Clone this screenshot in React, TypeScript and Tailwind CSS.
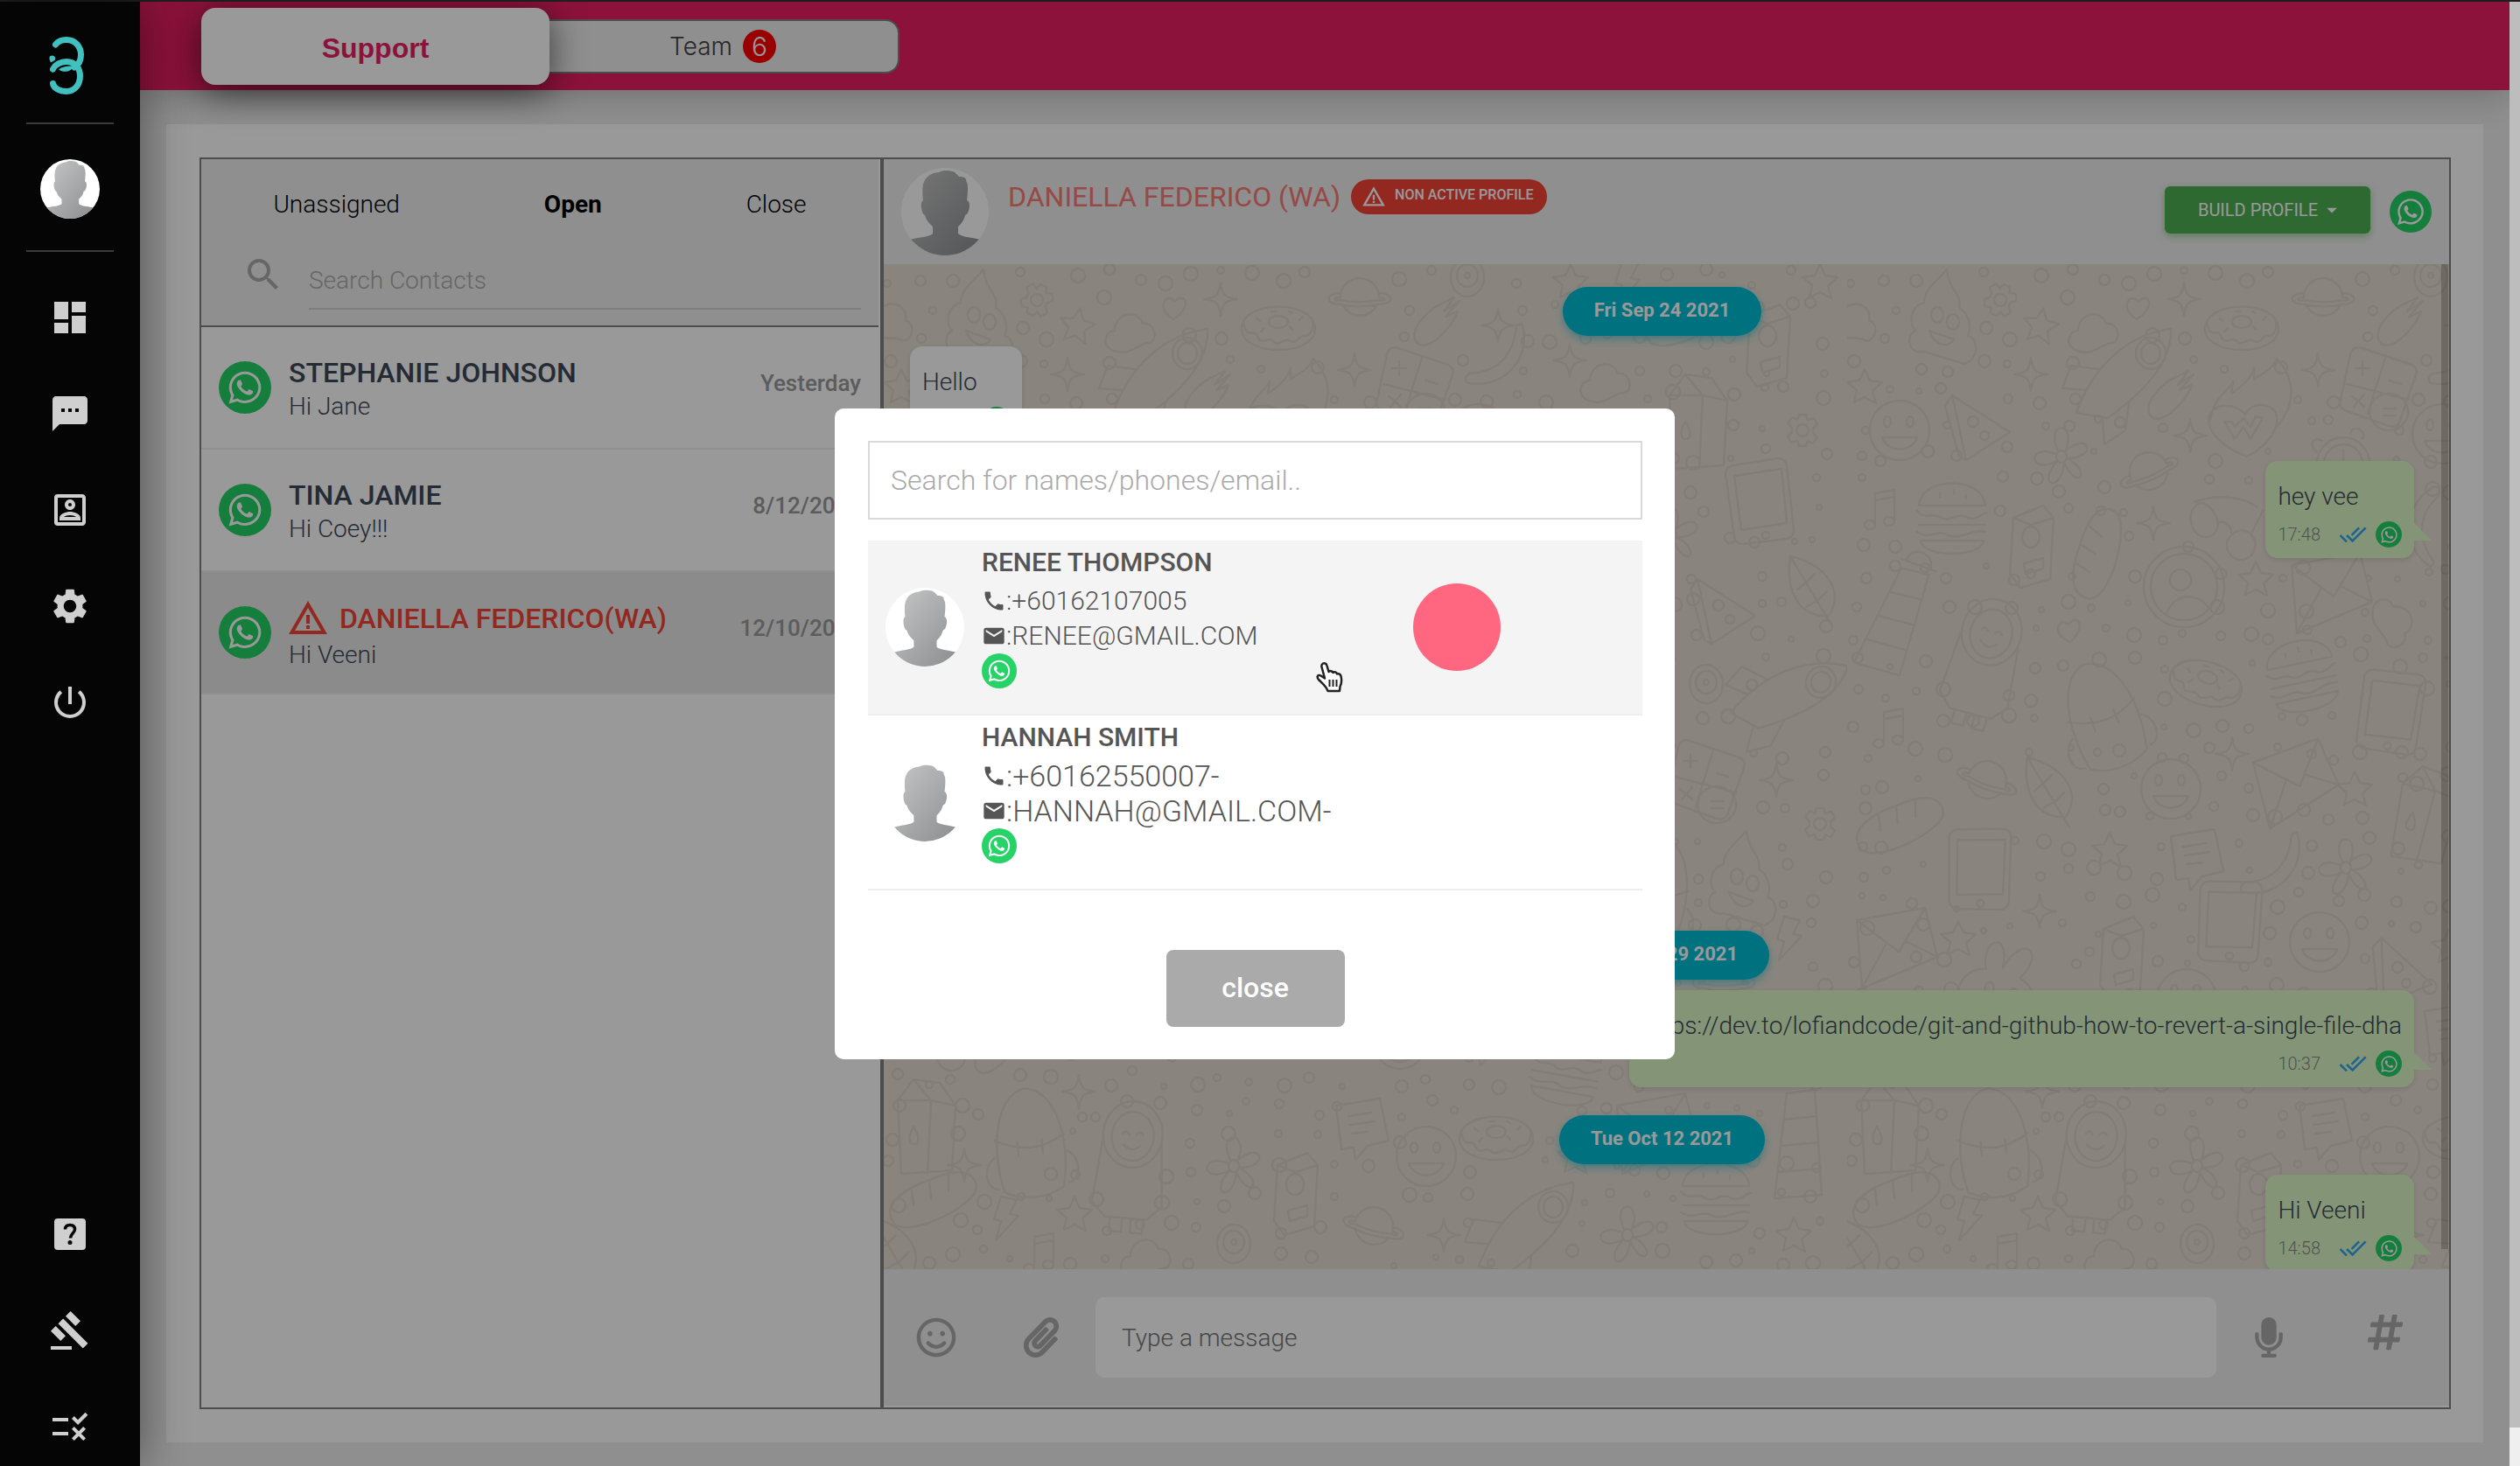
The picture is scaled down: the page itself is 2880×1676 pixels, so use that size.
import React from "react";
import {
  MdArrowDropDown,
  MdDashboard,
  MdDoneAll,
  MdEmail,
  MdGavel,
  MdOutlinePortrait,
  MdPhone,
  MdPowerSettingsNew,
  MdRule,
  MdSearch,
  MdSettings,
  MdTextsms,
  MdWarningAmber,
} from "react-icons/md";
import { FaHashtag, FaMicrophone, FaPaperclip, FaRegSmile, FaWhatsapp } from "react-icons/fa";

/* ---------- small drawings ---------- */

function Logo() {
  return (
    <svg viewBox="0 0 80 86" className="h-[86px] w-20" fill="none" stroke="#40c1c0" strokeWidth="7" strokeLinecap="round" aria-hidden="true">
      <path d="M23.500 19C26 15.500 30.500 13.500 36 13.500C46 13.500 52.500 21.500 52.500 30.500C52.500 37 49.500 42.500 45 45" />
      <path d="M20.500 47C23 42 29 38.500 36 38.500C46 38.500 51.500 46 51.500 55C51.500 65 45 72.500 36 72.500C28 72.500 21.500 69 20.500 63.500" />
      <path d="M27 47.500C32 43.500 39 43 44 44C42 49.500 33 52 27 47.500Z" fill="#40c1c0" stroke="none" />
      <path d="M18 39.500C15.500 35 16 31.500 19.500 31.500C23 31.500 24 35 22.500 37Z" fill="#40c1c0" stroke="none" />
    </svg>
  );
}

function Avatar({ id, className }: { id: string; className: string }) {
  return (
    <svg viewBox="0 0 100 100" className={className} role="img" aria-label="Profile picture">
      <defs>
        <linearGradient id={id + "-g"} x1="0" y1="0" x2="1" y2="1">
          <stop offset="0" stopColor="#c6c6c6" />
          <stop offset="1" stopColor="#8b8d90" />
        </linearGradient>
        <clipPath id={id + "-c"}>
          <circle cx="50" cy="50" r="50" />
        </clipPath>
      </defs>
      <circle cx="50" cy="50" r="50" fill="#fff" />
      <path
        clipPath={`url(#${id}-c)`}
        fill={`url(#${id}-g)`}
        d="M36 75V67C31 63 28 58 27 54C23 53 21 38 25 37C24 28 24 20 26 16C29 8 38 5 43 5C47 2 55 3 59 4C62 5 64 8 66 10C72 10 75 12 74 15C77 18 76 29 75 37C80 38 78 53 73 54C72 58 70 63 65 67V75C68 79 80 79 90 82V100H10V82C20 79 33 79 36 75Z"
      />
    </svg>
  );
}

function WhatsAppBadge({ size }: { size: "lg" | "md" | "sm" | "xs" }) {
  const box = { lg: "size-[60px]", md: "size-12", sm: "size-10", xs: "size-[30px]" }[size];
  const glyph = { lg: "size-[42px]", md: "size-[34px]", sm: "size-[28px]", xs: "size-[21px]" }[size];
  return (
    <span className={`flex shrink-0 items-center justify-center rounded-full bg-[#25d366] text-white ${box}`}>
      <FaWhatsapp className={glyph} aria-label="WhatsApp" />
    </span>
  );
}

function HelpBoxIcon() {
  return (
    <svg viewBox="0 0 48 48" className="size-12" aria-hidden="true">
      <rect x="6" y="6" width="36" height="36" rx="4" fill="currentColor" />
      <path d="M18.500 18.500C18.500 15 20.500 13.500 24 13.500C27.500 13.500 29.500 15.500 29.500 18.500C29.500 22.500 24.500 23.500 24.500 28.500" fill="none" stroke="#050505" strokeWidth="3.500" />
      <circle cx="24" cy="33.500" r="2.500" fill="#050505" />
    </svg>
  );
}

function HandCursor() {
  return (
    <svg viewBox="0 0 32 36" className="h-9 w-8" aria-hidden="true">
      <path
        d="M9 2.500C11 1.500 13 3 13.500 5L15.500 12C17 10.500 19.500 11 20.500 13C22 11.500 24.500 12.500 25 14.500C27 13.500 29 15 29.500 17C30.500 21 30.500 25 28.500 29L28 34H14.500C13 29 8 25 4.500 21.500C1 18 3 14.500 6.500 16.500L11 19.500L7.500 6.500C7 4.500 7.500 3.500 9 2.500Z"
        fill="#fff"
        stroke="#222"
        strokeWidth="2.500"
        strokeLinejoin="round"
      />
      <path d="M16.500 21V29M20.500 21V29M24.500 21V29" stroke="#222" strokeWidth="2" />
    </svg>
  );
}

/* ---------- chat wallpaper ---------- */

const STAR = "M0 -20L6 -7L20 -5L9 5L13 19L0 12L-12 18L-9 4L-20 -5L-6 -7Z";
const SPARK = "M0 -19C2 -5 4 -2 19 0C4 2 2 5 0 19C-2 5 -4 2 -19 0C-4 -2 -2 -5 0 -19Z";
const PLANET =
  "M-22 0A22 22 0 0 1 22 0M-20 8A22 22 0 0 0 20 8M-22 -5C-40 -5 -40 8 -22 8C-8 11 8 11 22 8C40 8 40 -5 22 -5M-22 0C-32 0 -30 5 -22 3M22 0C32 0 30 5 22 3C8 6 -8 6 -22 3";
const CLOUD = "M-22 20C-34 12 -28 -2 -18 -2C-18 -22 8 -28 14 -10C28 -12 32 8 22 12C10 10 0 30 -22 20Z";
const HEART = "M0 12C-24 2 -12 -18 -2 -8C8 -22 20 -6 0 12Z";
const DONUT =
  "M-42 0C-42 -34 42 -34 42 0C42 32 -42 32 -42 0ZM-40 -8C-36 14 -28 -2 -24 8C-20 20 -12 8 -6 14C0 22 8 8 14 14C22 18 24 6 30 8C36 8 42 0 38 -12M-11 -8A11 7 0 1 0 11 -8A11 7 0 1 0 -11 -8M-25 -12L-21 -9M-20 3L-16 -1M16 1L13 -3M24 -10L28 -14M-8 -20H-2M12 -20L16 -18";
const ROCKET =
  "M-60 46C-40 -10 0 -44 48 -50C50 -10 14 24 -24 52ZM-60 46L-24 52M8 -22A17 18 0 1 0 42 -22A17 18 0 1 0 8 -22M14 -22A11 12 0 1 0 36 -22A11 12 0 1 0 14 -22M-34 -4L-66 -8L-76 18L-50 20M0 34L-4 66L-28 82L-30 54";
const MITTEN = "M-24 20C-32 4 -6 -18 4 -22L20 -30L8 -14L26 -26L10 -8L24 -14C16 8 -14 36 -24 20Z";
const BANANA = "M24 -40C36 -8 10 36 -38 28C-44 20 -36 16 -28 16C2 12 16 -10 18 -38Z";
const CALC =
  "M-22 -46L38 -26Q46 -22 43 -14L24 40Q20 46 12 44L-38 26Q-46 22 -43 14L-32 -38Q-30 -46 -22 -46ZM8 -34L-12 30M-36 -4L34 14M-18 -30V-14M-26 -22H-10M12 -8L26 -4M-30 10L-16 22M-16 8L-28 22M-10 28A22 21 0 1 0 34 28A22 21 0 1 0 -10 28M6 24H20M6 32H20";
const FLAME =
  "M-42 6C-38 -20 -22 -26 -16 -38L-18 -24C-6 -32 6 -42 8 -54L8 -40C18 -48 30 -52 34 -64C56 -40 56 -12 34 14M0 48C-60 24 -48 -12 -24 -10C-12 -10 -4 -4 -2 0C4 -14 24 -14 32 -4C40 14 24 36 0 48ZM-26 8L-14 28L-4 14L4 28L18 4L10 2L4 14L-4 4L-14 14L-18 8Z";
const CLOCK =
  "M-30 0A30 30 0 1 0 30 0A30 30 0 1 0 -30 0M-22 0A22 22 0 1 0 22 0A22 22 0 1 0 -22 0M0 0V-16M0 0L10 6M-24 -26C-40 -34 -36 -12 -30 -14M8 -34C10 -46 28 -38 22 -28";
const FACE =
  "M-34 0A34 34 0 1 0 34 0A34 34 0 1 0 -34 0M-18 -10A4 6 0 1 0 -10 -10A4 6 0 1 0 -18 -10M8 -10A4 6 0 1 0 16 -10A4 6 0 1 0 8 -10M-20 8C-14 26 14 26 20 8Z";
const GLASSES =
  "M-34 -20C-48 -10 -38 18 -22 16C-8 14 -6 -2 -14 -12C-20 -22 -30 -26 -34 -20ZM6 14C-6 24 4 44 20 42C34 38 38 22 28 12C20 6 12 8 6 14ZM-10 0C-2 -4 6 2 6 12M-36 -24C-10 -34 20 -30 36 -18M30 10L42 -14";
const PERSON =
  "M-46 0A46 46 0 1 0 46 0A46 46 0 1 0 -46 0M-38 0A38 38 0 1 0 38 0A38 38 0 1 0 -38 0M-16 -8A12 12 0 1 0 8 -8A12 12 0 1 0 -16 -8M-20 30C-10 6 16 6 28 24";
const ENVELOPE = "M-42 -28L36 -42L50 14L-36 50ZM-42 -28L6 8L36 -42M-36 50L-8 -2M50 14L14 -4";
const CAN = "M-20 -30L14 -44L26 -30L22 40L-12 50L-24 34ZM-20 -30L0 -22L26 -30M-10 -8A10 12 0 1 0 10 -8A10 12 0 1 0 -10 -8M-8 22L14 16V28L-6 34Z";
const DEVICE = "M-30 -40L22 -48Q30 -48 32 -40L40 34Q40 42 32 44L-18 50Q-26 50 -28 42L-38 -30Q-38 -38 -30 -40ZM-28 -28L26 -36L32 26L-20 34ZM4 40A4 4 0 1 0 12 40A4 4 0 1 0 4 40";
const BUNNY =
  "M-30 50C-60 30 -50 -4 -24 -8C-40 -40 -8 -60 -6 -14C6 -60 38 -44 16 -8C44 0 50 34 30 50M-20 12A5 7 0 1 0 -10 12A5 7 0 1 0 -20 12M8 12A5 7 0 1 0 18 12A5 7 0 1 0 8 12M-6 26L0 32L8 26";
const BACKPACK = "M-34 60C-44 20 -38 -50 0 -56C38 -50 46 10 34 60C14 72 -14 72 -34 60ZM-40 0C-10 16 14 16 40 0M-14 4V20M14 4V20M-42 20C-58 30 -54 56 -40 56M42 20C58 30 54 56 40 56";
const KID =
  "M-34 -20A34 38 0 1 1 34 -20A34 38 0 1 1 -34 -20M-24 -18A24 28 0 1 1 24 -18A24 28 0 1 1 -24 -18M-12 -20Q-8 -26 -4 -20M4 -20Q8 -26 12 -20M-10 -8Q0 2 10 -8M-34 -10L-40 60L-24 76H24L40 60L34 -10M-18 76V92H-4V76M6 76V92H20V76";
const FLOWER =
  "M-6 0A6 7 0 1 0 6 0A6 7 0 1 0 -6 0M-4 -7C-20 -40 18 -42 5 -7C32 -30 42 2 6 2C36 18 18 40 3 7C0 42 -30 34 -5 5C-38 22 -40 -16 -6 -3";
const BURGER = "M-38 -14C-36 -48 36 -48 38 -14ZM-40 -8C-30 4 -22 -8 -12 0C-2 6 6 -8 18 0C28 4 34 -6 40 -6M-38 8H38M-40 16C-26 26 -16 12 -4 20C10 26 22 12 38 16M-36 26C-34 46 34 46 36 26ZM-14 -28V-24M2 -32V-28M16 -26V-22";
const BREAD = "M-46 26C-58 6 -30 -12 -6 -20C20 -32 46 -36 50 -14C52 8 -34 50 -46 26ZM-24 -10L-22 8M-4 -20L-2 0M18 -28L18 -8";
const MILK = "M-32 -30L-14 -54L16 -50L34 -24L30 50L-28 54ZM-32 -30H6L34 -24M6 -30L2 54M-14 -54L6 -30M-14 0C-22 14 -18 20 -13 20C-8 20 -6 12 -14 0Z";
const LIGHTHOUSE = "M-16 -50L16 -54L24 66L-30 70ZM-20 -60H22M-14 -60C-14 -80 14 -80 16 -60M-18 -20L18 -24M-22 10L20 6M-26 40L22 36";
const BOLT = "M-6 -24L12 -20L4 -4L14 -2L-12 26L-6 4L-14 2Z";
const CHAT = "M-30 -26L20 -34L30 14L6 20L-8 36L-10 22L-24 24ZM-16 -14L10 -18M-14 -4L14 -8M-12 6L6 4";
const PIZZA = "M-30 -30L36 12L-14 44ZM-30 -30L-38 -18L-22 40L-14 44M-12 0A6 6 0 1 0 0 0A6 6 0 1 0 -12 0M2 16A5 5 0 1 0 12 16A5 5 0 1 0 2 16";
const NOTE = "M-8 18V-18L14 -22V14M-20 18A6 5 0 1 0 -8 18A6 5 0 1 0 -20 18M2 14A6 5 0 1 0 14 14A6 5 0 1 0 2 14M-8 -10L14 -14";
const LEAF = "M-24 -36C12 -28 40 0 20 32C-14 34 -30 4 -24 -36ZM-24 -36L24 44M-4 -8L-16 2M-4 -8L4 -16M8 14L-6 22M8 14L18 4";
const POOP =
  "M6 -52C-4 -40 -20 -30 -20 -14C-36 -10 -38 10 -30 18C-42 24 -38 46 -20 42L26 56C44 50 42 26 30 24C36 10 28 -4 20 -8C24 -24 8 -28 6 -52ZM-12 0A7 9 0 1 0 2 0A7 9 0 1 0 -12 0M6 8A7 9 0 1 0 20 8A7 9 0 1 0 6 8M-14 18C-8 36 8 38 14 28Z";
const GEAR = "M-4 -18H4L6 -12L13 -14L17 -7L12 -2V3L17 8L12 15L6 12L4 18H-4L-6 12L-13 14L-17 7L-12 2V-3L-17 -8L-12 -15L-6 -12ZM-7 0A7 7 0 1 0 7 0A7 7 0 1 0 -7 0";
const EYE = "M-19 0A19 22 0 1 0 19 0A19 22 0 1 0 -19 0M-12 -2A12 13 0 1 0 12 -2A12 13 0 1 0 -12 -2M-3 -2A3 3 0 1 0 3 -2A3 3 0 1 0 -3 -2";

type Doodle = [string, number, number, number];

const DOODLES: Doodle[] = [
  [CLOUD, 8, 66, 30], [POOP, 108, 58, 0], [GEAR, 175, 41, 25], [STAR, 221, 70, 10], [CLOUD, 282, 78, 0], [HEART, 333, 51, 10],
  [SPARK, 385, 40, 0], [DONUT, 451, 74, 0], [PLANET, 544, 38, 0], [MITTEN, 632, 68, 0], [EYE, 667, 15, 0], [SPARK, 702, 70, 0],
  [BANANA, 705, 108, 0], [SPARK, 784, 110, 0], [CLOUD, 825, 135, 0], [STAR, 785, 20, 0], [BOLT, 850, 20, 0], [ROCKET, 322, 124, 0],
  [SPARK, 538, 121, 0], [CALC, 607, 141, 0], [FLAME, 457, 172, 0], [SPARK, 210, 126, 0], [MITTEN, 370, 152, 0], [FACE, 680, 194, 0],
  [CLOCK, 567, 228, 0], [SPARK, 392, 196, 0], [PLANET, 345, 237, -24], [GLASSES, 433, 296, 0], [SPARK, 350, 296, 0],
  [PERSON, 385, 369, 0], [STAR, 467, 360, 0], [ENVELOPE, 550, 372, 0], [BANANA, 660, 300, 140], [CLOUD, 625, 410, 80], [BREAD, 285, 330, -50],
  [FACE, 60, 190, 0], [STAR, 20, 140, 0], [PIZZA, 150, 180, 0], [FLOWER, 245, 220, 0], [BURGER, 120, 290, 0], [NOTE, 40, 280, 0],
  [CAN, 210, 320, 0], [BUNNY, 800, 240, 0], [BREAD, 920, 60, 0], [CAN, 1010, 90, 0], [MILK, 930, 180, 0], [GEAR, 1050, 190, 0],
  [DEVICE, 1000, 270, 0], [FLOWER, 900, 310, 0], [STAR, 1070, 20, 0], [CHAT, 740, 330, 0], [BOLT, 830, 350, 0], [PIZZA, 960, 390, 0],
  [LEAF, 1060, 370, 0], [LIGHTHOUSE, 60, 400, 20], [KID, 160, 440, 15], [HEART, 255, 420, 0], [BACKPACK, 290, 510, -20], [DONUT, 410, 480, 15],
  [BURGER, 520, 470, -12], [DEVICE, 620, 510, 15], [SPARK, 700, 450, 0], [CLOCK, 760, 440, 0], [GLASSES, 860, 450, 20], [EYE, 940, 480, 0],
  [ROCKET, 1040, 490, 20], [NOTE, 50, 530, 0], [PLANET, 160, 590, 20], [LEAF, 230, 600, 0], [FACE, 370, 600, 0], [SPARK, 440, 560, 0],
  [ENVELOPE, 510, 590, -10], [STAR, 580, 600, 0], [MILK, 660, 630, 12], [PERSON, 770, 560, 0], [CLOUD, 860, 550, 0], [CALC, 940, 590, 0],
  [SPARK, 1020, 590, 0], [GEAR, 1070, 640, 0], [BREAD, 60, 640, 0], [STAR, 300, 670, 0], [CHAT, 400, 680, 0], [BANANA, 490, 690, 0],
  [FLOWER, 570, 690, 0], [BUNNY, 750, 680, 0], [HEART, 830, 640, 0], [BACKPACK, 880, 710, 10], [POOP, 980, 700, 0], [BOLT, 1035, 770, 0],
  [DEVICE, 150, 690, 8], [SPARK, 220, 740, 0], [ENVELOPE, 53, 778, 0], [STAR, 127, 771, 0], [BUNNY, 180, 820, 15], [CAN, 313, 790, 0],
  [DEVICE, 436, 750, 10], [FACE, 540, 775, 0], [PIZZA, 635, 805, 10], [FACE, 388, 840, 0], [GEAR, 250, 850, 0], [STAR, 688, 780, 0],
  [LEAF, 800, 800, 0], [PLANET, 960, 820, 0], [PERSON, 880, 870, 0], [GLASSES, 60, 880, 0], [BREAD, 480, 870, 30], [CLOCK, 590, 890, 0],
  [CHAT, 690, 880, 0], [BURGER, 780, 920, 10], [SPARK, 1000, 900, 0], [MITTEN, 130, 900, 0], [HEART, 330, 900, 0],
  [LIGHTHOUSE, 1048, 998, 0], [MILK, 48, 986, 0], [BACKPACK, 166, 998, -6], [KID, 283, 1015, 5], [SPARK, 223, 946, 0], [SPARK, 92, 1030, 0],
  [FLOWER, 400, 1031, 0], [CHAT, 547, 988, 0], [BURGER, 951, 1068, 0], [BREAD, 56, 1068, 0], [BOLT, 140, 1090, 0], [STAR, 218, 1086, 0],
  [LEAF, 10, 1126, 0], [FACE, 620, 1020, 0], [CAN, 470, 1060, 0], [NOTE, 180, 1130, 0], [DONUT, 700, 1000, 0], [CLOUD, 300, 1136, 0],
  [ENVELOPE, 880, 990, 0], [STAR, 790, 1020, 0], [PLANET, 560, 1100, 15], [EYE, 400, 1120, 0], [ROCKET, 740, 1100, 0], [FLOWER, 850, 1110, 0],
  [STAR, 1040, 1110, 0], [SPARK, 640, 1110, 0],
];

// Little rings scattered between the doodles on a jittered grid.
const RINGS = (() => {
  const rings: { x: number; y: number; r: number }[] = [];
  let seed = 7;
  const next = () => {
    seed = (seed * 16807) % 2147483647;
    return seed / 2147483647;
  };
  for (let y = 14; y < 1150; y += 34) {
    for (let x = 14; x < 1090; x += 34) {
      const cx = x + next() * 20 - 10;
      const cy = y + next() * 20 - 10;
      const r = 3 + Math.floor(next() * 6);
      const free = DOODLES.every(([path, dx, dy]) => {
        const reach = path.length > 150 ? 48 : path.length > 75 ? 34 : 26;
        return Math.hypot(dx - cx, dy - cy) > reach;
      });
      if (free) rings.push({ x: Math.round(cx), y: Math.round(cy), r });
    }
  }
  return rings;
})();

function Wallpaper() {
  return (
    <svg className="absolute inset-0 h-full w-full" aria-hidden="true">
      <defs>
        <pattern id="doodles" width="1101" height="1160" patternUnits="userSpaceOnUse">
          <g fill="none" stroke="#dad0c7" strokeWidth="2.500" strokeLinejoin="round" strokeLinecap="round">
            {DOODLES.map(([d, x, y, a], i) => (
              <path key={i} d={d} transform={`translate(${x} ${y}) rotate(${a})`} />
            ))}
            {RINGS.map((c, i) => (
              <circle key={i} cx={c.x} cy={c.y} r={c.r} />
            ))}
          </g>
        </pattern>
      </defs>
      <rect width="100%" height="100%" fill="url(#doodles)" />
    </svg>
  );
}

/* ---------- sidebar ---------- */

const TOP_NAV = [
  { label: "Dashboard", icon: <MdDashboard className="size-12" /> },
  { label: "Messages", icon: <MdTextsms className="size-12" /> },
  { label: "Contacts", icon: <MdOutlinePortrait className="size-12" /> },
  { label: "Settings", icon: <MdSettings className="size-12" /> },
  { label: "Log out", icon: <MdPowerSettingsNew className="size-12" /> },
];

const BOTTOM_NAV = [
  { label: "Help", icon: <HelpBoxIcon /> },
  { label: "Terms", icon: <MdGavel className="size-12" /> },
  { label: "Rules", icon: <MdRule className="size-12" /> },
];

function NavItem({ label, icon }: { label: string; icon: React.ReactNode }) {
  return (
    <a href="#" aria-label={label} className="flex h-[110px] items-center justify-center">
      {icon}
    </a>
  );
}

function Sidebar() {
  return (
    <aside className="relative z-20 flex w-40 shrink-0 flex-col bg-[#050505] text-[#cfcfcf] shadow-[0_0_50px_rgba(0,0,0,0.45)]">
      <a href="#" aria-label="Home" className="mt-[30px] ml-10 self-start">
        <Logo />
      </a>
      <hr className="mx-[30px] mt-[22px] border-t-2 border-[#3c3c3c]" />
      <Avatar id="me" className="mx-auto mt-10 size-[68px]" />
      <hr className="mx-[30px] mt-9 border-t-2 border-[#3c3c3c]" />
      <nav className="mt-5 flex flex-col">
        {TOP_NAV.map((n) => (
          <NavItem key={n.label} {...n} />
        ))}
      </nav>
      <nav className="mt-auto mb-[-10px] flex flex-col">
        {BOTTOM_NAV.map((n) => (
          <NavItem key={n.label} {...n} />
        ))}
      </nav>
    </aside>
  );
}

/* ---------- header ---------- */

function Header() {
  return (
    <header className="relative flex h-[101px] shrink-0 items-start bg-[#e91e63] pl-[70px] shadow-[0_4px_40px_rgba(0,0,0,0.24)]">
      <button className="relative mt-[7px] flex h-[88px] w-[398px] items-center justify-center rounded-2xl bg-white pt-1 font-['Liberation_Sans',sans-serif] text-[32px] font-bold text-[#e91e63] shadow-[0_8px_40px_rgba(0,0,0,0.6)]">
        Support
      </button>
      <button className="mt-5 -ml-4 flex h-[62px] w-[416px] items-center justify-center gap-3 rounded-2xl border-2 border-[#808080] bg-[#eee] pl-3 font-[Inter,sans-serif] text-[28px] font-light text-[#444]">
        Team
        <span className="flex size-[38px] items-center justify-center rounded-full bg-[#f00] text-[30px] text-white">6</span>
      </button>
    </header>
  );
}

/* ---------- contact list ---------- */

const CHATS = [
  { name: "STEPHANIE JOHNSON", text: "Hi Jane", date: "Yesterday", alert: false },
  { name: "TINA JAMIE", text: "Hi Coey!!!", date: "8/12/2021", alert: false },
  { name: "DANIELLA FEDERICO(WA)", text: "Hi Veeni", date: "12/10/2021", alert: true },
];

function ContactList() {
  return (
    <section className="mr-0.5 flex w-[774px] shrink-0 flex-col">
      <div className="h-48 border-b-2 border-[#808080] bg-[#eee]">
        <div role="tablist" className="flex justify-around pt-[31px] text-[28px] leading-[42px] font-light text-black">
          <button role="tab" aria-selected="false">Unassigned</button>
          <button role="tab" aria-selected="true" className="font-bold">Open</button>
          <button role="tab" aria-selected="false">Close</button>
        </div>
        <label className="mt-[35px] flex items-start pr-5 pl-[47px]">
          <MdSearch className="size-12 shrink-0 text-[#aaa]" aria-hidden="true" />
          <input
            aria-label="Search Contacts"
            placeholder="Search Contacts"
            className="mt-1.5 ml-7 h-[58px] min-w-0 flex-1 border-b-2 border-[#d2d2d2] bg-transparent pb-2 text-[28px] font-light outline-none placeholder:text-[#aaa]"
          />
        </label>
      </div>
      <ul>
        {CHATS.map((c) => (
          <li
            key={c.name}
            className={`flex h-[140px] items-start border-b-2 border-[#eee] pr-5 pl-5 ${c.alert ? "bg-[#e8e8e8]" : "bg-white"}`}
          >
            <div className="mt-[39px]">
              <WhatsAppBadge size="lg" />
            </div>
            <div className="mt-[31px] ml-5 flex-1 text-[#3c4858]">
              {c.alert ? (
                <div className="mb-0.5 flex h-11 items-center gap-3 text-[32px] font-medium text-[#f44336]">
                  <MdWarningAmber className="-ml-0.5 size-12" aria-hidden="true" />
                  {c.name}
                </div>
              ) : (
                <div className="text-[32px] leading-[42px] font-medium">{c.name}</div>
              )}
              <div className="text-[28px] leading-9 font-light">{c.text}</div>
            </div>
            <time className="mt-[46px] text-[26px] leading-9 font-medium text-[#999]">{c.date}</time>
          </li>
        ))}
      </ul>
    </section>
  );
}

/* ---------- conversation ---------- */

function DatePill({ children, className = "" }: { children: React.ReactNode; className?: string }) {
  return (
    <div className={`mb-3 flex h-14 items-center self-center rounded-full bg-[#00bcd4] px-9 pb-1 text-[22px] font-bold text-white shadow-[0_4px_10px_rgba(0,188,212,0.5)] ${className}`}>
      {children}
    </div>
  );
}

function Bubble({ text, time, sent, className = "" }: { text: string; time: string; sent: boolean; className?: string }) {
  return (
    <div
      className={`relative h-[111px] rounded-[14px] px-3.5 pt-[21px] shadow-[0_2px_6px_rgba(0,0,0,0.12)] ${sent ? "self-end bg-[#dcf8c6]" : "self-start bg-white"} ${className}`}
    >
      <p className="text-[28px] leading-10 font-light whitespace-nowrap text-[#3c4858]">{text}</p>
      <div className="mt-2 flex h-[30px] items-center justify-end">
        <time className="mr-[21px] text-[20px] font-light text-[#888]">{time}</time>
        {sent && <MdDoneAll className="mr-2.5 size-8 text-[#34a5ee]" aria-label="Read" />}
        <WhatsAppBadge size="xs" />
      </div>
      {sent && (
        <svg viewBox="0 0 20 20" className="absolute top-[71px] left-full h-5 w-5" aria-hidden="true">
          <path d="M0 0L20 20H0Z" fill="#dcf8c6" />
        </svg>
      )}
    </div>
  );
}

function Conversation() {
  return (
    <section className="flex min-w-0 flex-1 flex-col border-l-4 border-[#808080] pb-0.5">
      <div className="flex h-[120px] shrink-0 items-center bg-[#eee] pr-5 pl-5">
        <Avatar id="peer" className="size-[100px]" />
        <div className="mb-[34px] ml-[22px] flex items-center gap-3">
          <h1 className="text-[32px] leading-[44px] text-[#fa7b76]">DANIELLA FEDERICO (WA)</h1>
          <span className="flex h-10 items-center rounded-full bg-[#f44336] pr-4 pl-3 text-[16px] font-medium text-white">
            <MdWarningAmber className="mr-2.5 size-7" aria-hidden="true" />
            <span className="pb-1">NON ACTIVE PROFILE</span>
          </span>
        </div>
        <button className="mr-[22px] mb-1 ml-auto flex h-[54px] items-center rounded-md bg-[#4caf50] pr-[30px] pl-[38px] text-[20px] text-white shadow-[0_3px_8px_rgba(76,175,80,0.5)]">
          BUILD PROFILE
          <MdArrowDropDown className="ml-0.5 size-7" aria-hidden="true" />
        </button>
        <WhatsAppBadge size="md" />
      </div>

      <div className="relative min-h-0 flex-1 overflow-hidden bg-[#e5ddd3]">
        <Wallpaper />
        <div className="relative flex flex-col pt-[26px] pr-10 pl-[30px]">
          <DatePill>Fri Sep 24 2021</DatePill>
          <Bubble text="Hello" time="17:46" sent={false} />
          <Bubble text="hey vee" time="17:48" sent className="mt-5" />
          <DatePill className="mt-[426px]">Wed Sep 29 2021</DatePill>
          <Bubble text="https://dev.to/lofiandcode/git-and-github-how-to-revert-a-single-file-dha" time="10:37" sent />
          <DatePill className="mt-8">Tue Oct 12 2021</DatePill>
          <Bubble text="Hi Veeni" time="14:58" sent />
        </div>
        <div className="absolute top-0 right-px h-[98%] w-2 bg-black/20" />
      </div>

      <form className="flex h-[156px] shrink-0 items-center bg-[#eee] text-[#aaa]">
        <button type="button" aria-label="Emoji" className="flex w-[120px] justify-center">
          <FaRegSmile className="size-[46px]" />
        </button>
        <button type="button" aria-label="Attach" className="flex w-[120px] justify-center">
          <FaPaperclip className="size-[46px]" />
        </button>
        <input
          aria-label="Message"
          placeholder="Type a message"
          className="ml-0.5 h-[92px] min-w-0 flex-1 rounded-[10px] bg-white px-[30px] text-[28px] font-light outline-none placeholder:text-[#757575]"
        />
        <button type="button" aria-label="Record" className="flex w-[120px] justify-center">
          <FaMicrophone className="size-[46px]" />
        </button>
        <button type="button" aria-label="Tags" className="flex w-[146px] justify-center pb-3">
          <FaHashtag className="size-[46px]" />
        </button>
      </form>
    </section>
  );
}

/* ---------- contact picker dialog ---------- */

const RESULTS = [
  { id: "renee", name: "RENEE THOMPSON", phone: "+60162107005", email: "RENEE@GMAIL.COM", active: true },
  { id: "hannah", name: "HANNAH SMITH", phone: "+60162550007-", email: "HANNAH@GMAIL.COM-", active: false },
];

function PickerDialog() {
  return (
    <div className="fixed inset-0 z-10 flex items-center justify-center bg-black/40 pt-0.5 pr-3">
      <div role="dialog" aria-modal="true" aria-label="Find contact" className="flex w-[960px] flex-col rounded-[10px] bg-white py-[37px] pr-[37px] pl-[38px] text-[#555]">
        <input
          aria-label="Search for names, phones or email"
          placeholder="Search for names/phones/email.."
          className="h-[90px] border-2 border-[#d9d9d9] px-6 text-[32px] font-light outline-none placeholder:text-[#aaa]"
        />
        <ul className="mt-6">
          {RESULTS.map((r) => (
            <li key={r.id} className={`relative flex h-[200px] items-center border-b-2 border-[#eee] pl-5 ${r.active ? "bg-[#f4f4f4]" : "bg-white"}`}>
              <Avatar id={r.id} className="size-[90px]" />
              <div className="ml-5 self-start">
                <div className="text-[30px] leading-[49px] font-medium">{r.name}</div>
                <div className={`flex h-10 items-center font-light ${r.active ? "text-[30px] leading-[38px]" : "text-[34px]"}`}>
                  <MdPhone className="size-7" aria-hidden="true" />:{r.phone}
                </div>
                <div className={`flex h-10 items-center font-light ${r.active ? "text-[30px] leading-[38px]" : "text-[34px]"}`}>
                  <MdEmail className="size-7" aria-hidden="true" />:{r.email}
                </div>
                <WhatsAppBadge size="sm" />
              </div>
              {r.active && (
                <>
                  <span className="absolute top-[49px] left-[623px] size-[100px] rounded-full bg-[#ff6680]" />
                  <span className="absolute top-[138px] left-[511px]">
                    <HandCursor />
                  </span>
                </>
              )}
            </li>
          ))}
        </ul>
        <button className="mt-[68px] h-[88px] w-[204px] self-center rounded-lg bg-[#aaa] pb-0.5 text-[32px] font-medium text-white">close</button>
      </div>
    </div>
  );
}

export default function App() {
  return (
    <div className="flex h-screen flex-col overflow-hidden bg-[#eee] font-[Roboto,sans-serif]">
      <div className="relative z-20 h-0.5 shrink-0 bg-[#1e1e1e]" />
      <div className="flex min-h-0 flex-1">
        <Sidebar />
        <div className="flex min-w-0 flex-1 flex-col">
          <Header />
          <main className="mx-[30px] mt-[39px] mb-[27px] flex min-h-0 flex-1 bg-white py-[38px] pr-[37px] pl-[38px]">
            <div className="flex min-w-0 flex-1 border-2 border-[#808080]">
              <ContactList />
              <Conversation />
            </div>
          </main>
        </div>
        <div className="relative z-20 w-3 shrink-0 bg-[#efefef]">
          <div className="h-[97.4%] bg-[#bdbdbd]" />
        </div>
      </div>
      <PickerDialog />
    </div>
  );
}
